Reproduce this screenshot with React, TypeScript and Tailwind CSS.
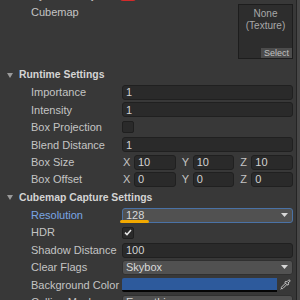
import { Pipette } from 'lucide-react'
import type { ReactNode } from 'react'

function Row({ label, children, labelClass = 'text-[#c4c4c4]' }: { label: string; children?: ReactNode; labelClass?: string }) {
  return (
    <div className="flex items-center h-[17.4px] shrink-0">
      <div className={`w-[122px] pl-[31px] whitespace-nowrap overflow-hidden ${labelClass}`}>{label}</div>
      <div className="flex-1 min-w-0 flex items-center">{children}</div>
    </div>
  )
}

function Header({ title }: { title: string }) {
  return (
    <div className="flex items-center h-[17.4px] shrink-0 pl-[7px]">
      <svg width="6" height="5" viewBox="0 0 6 5" className="mr-[6px]">
        <path d="M0 0H6L3 5Z" fill="#9a9a9a" />
      </svg>
      <span className="font-bold text-[10.4px] text-[#d4d4d4] whitespace-nowrap">{title}</span>
    </div>
  )
}

function Field({ value }: { value: string }) {
  return (
    <div className="flex-1 h-[15px] rounded-[3px] bg-[#2a2a2a] border border-[#202020] pl-[3px] flex items-center text-[#d2d2d2]">
      {value}
    </div>
  )
}

function Arrow() {
  return (
    <svg width="7" height="4" viewBox="0 0 7 4" className="ml-auto mr-[4px]">
      <path d="M0 0H7L3.5 4Z" fill="#d8d8d8" />
    </svg>
  )
}

function Dropdown({ value, focused = false }: { value: string; focused?: boolean }) {
  return (
    <div
      className={`flex-1 h-[15px] rounded-[3px] bg-[#515151] border pl-[3px] flex items-center text-[#d8d8d8] ${
        focused ? 'border-[#4a72a6]' : 'border-[#303030]'
      }`}
    >
      {value}
      <Arrow />
    </div>
  )
}

function Checkbox({ checked = false }: { checked?: boolean }) {
  return (
    <div className="w-[12px] h-[12px] rounded-[2px] bg-[#2a2a2a] border border-[#1f1f1f] flex items-center justify-center">
      {checked && (
        <svg width="8" height="7" viewBox="0 0 8 7">
          <path d="M1 3.6L3 5.6L7 1" stroke="#e6e6e6" strokeWidth="1.5" fill="none" />
        </svg>
      )}
    </div>
  )
}

function Vector({ values }: { values: string[] }) {
  const axes = ['X', 'Y', 'Z']
  return (
    <div className="flex-1 flex gap-[5px]">
      {values.map((v, i) => (
        <div key={axes[i]} className="flex-1 flex items-center">
          <span className="w-[12px] pl-[1px] text-[#c4c4c4]">{axes[i]}</span>
          <Field value={v} />
        </div>
      ))}
    </div>
  )
}

export default function App() {
  return (
    <div className="w-[300px] h-[300px] overflow-hidden bg-[#383838] flex font-['Liberation_Sans',Arial,sans-serif] text-[11px]">
      <div className="flex-1 flex flex-col pr-[3px] mt-[-13px]">
        {/* Partly scrolled-off row */}
        <Row label="Dynamic Objects">
          <div className="w-[16px] h-[14px] -ml-[2px] -mt-[3px] rounded-[3px] bg-[#d42a2a]" />
        </Row>

        {/* Cubemap object field */}
        <div className="flex h-[55px] mt-[-0.4px] shrink-0">
          <div className="w-[122px] pl-[31px] leading-[17px] text-[#c4c4c4]">Cubemap</div>
          <div className="flex-1 flex justify-end">
            <div className="w-[55px] h-[55px] bg-[#2d2d2d] border border-[#1d1d1d] flex flex-col items-center text-[10px] leading-[11.5px] text-[#a8a8a8] pt-[3px]">
              <span>None</span>
              <span>(Texture)</span>
              <div className="mt-auto self-end w-[31px] h-[10px] bg-[#4c4c4c] text-[9px] leading-[10px] text-[#c0c0c0] text-center">
                Select
              </div>
            </div>
          </div>
        </div>

        <div className="mt-[7.5px]">
          <Header title="Runtime Settings" />
        </div>
        <Row label="Importance"><Field value="1" /></Row>
        <Row label="Intensity"><Field value="1" /></Row>
        <Row label="Box Projection"><Checkbox /></Row>
        <Row label="Blend Distance"><Field value="1" /></Row>
        <Row label="Box Size"><Vector values={['10', '10', '10']} /></Row>
        <Row label="Box Offset"><Vector values={['0', '0', '0']} /></Row>

        <div className="mt-[1px]">
          <Header title="Cubemap Capture Settings" />
        </div>
        <Row label="Resolution" labelClass="text-[#7aa6e4]">
          <div className="relative flex-1 flex">
            <Dropdown value="128" focused />
            <div className="absolute left-[-2px] top-[12px] w-[29px] h-[3px] rounded-full bg-[#f2a900]" />
          </div>
        </Row>
        <Row label="HDR"><Checkbox checked /></Row>
        <Row label="Shadow Distance"><Field value="100" /></Row>
        <Row label="Clear Flags"><Dropdown value="Skybox" /></Row>
        <Row label="Background Color">
          <div className="flex-1 flex items-center h-[15px]">
            <div className="flex-1 h-[14px] flex flex-col rounded-l-[2px] overflow-hidden">
              <div className="h-[12px] bg-[#2d5a9c]" />
              <div className="h-[2px] bg-[#050505]" />
            </div>
            <div className="w-[16px] h-[14px] flex items-center justify-center">
              <Pipette size={11} color="#d0d0d0" strokeWidth={2} />
            </div>
          </div>
        </Row>
        <Row label="Culling Mask"><Dropdown value="Everything" /></Row>
      </div>
      <div className="w-[4px] border-l border-[#242424] bg-[#474747]" />
    </div>
  )
}
